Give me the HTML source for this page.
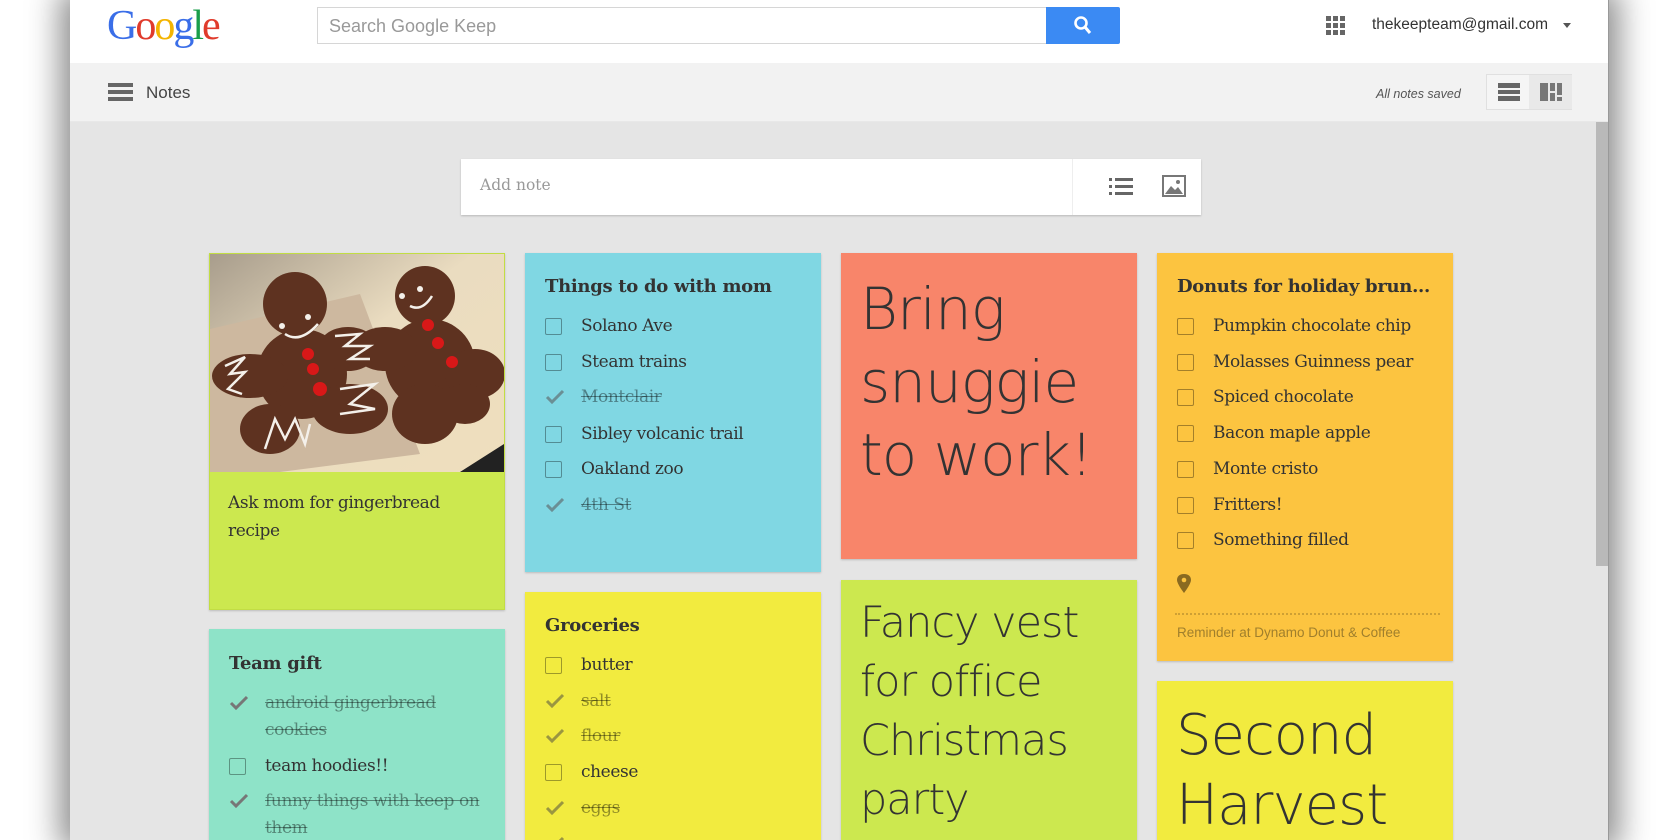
<!DOCTYPE html>
<html style="height:840px;overflow:hidden"><head><meta charset="utf-8"><style>
*{margin:0;padding:0;box-sizing:border-box}
body{width:1680px;height:840px;overflow:hidden;background:#fff;position:relative;font-family:"Liberation Sans",sans-serif}
.win{position:absolute;left:70px;top:0;width:1539px;height:840px;background:#e5e5e5;box-shadow:0 0 30px 10px rgba(0,0,0,.45);overflow:hidden}
.hdr{position:absolute;left:0;top:0;width:1539px;height:63px;background:#fff}
.tb{position:absolute;left:0;top:63px;width:1539px;height:59px;background:#f2f2f2;border-bottom:1px solid #e8e8e8}
.abs{position:absolute}
.note{position:absolute;width:296px;box-shadow:0 1px 2px rgba(0,0,0,.18)}
.slab{font-family:"DejaVu Serif","Liberation Serif",serif;color:#333}
.title{position:absolute;left:20px;font-weight:bold;font-size:18px;letter-spacing:-.3px;white-space:nowrap}
.it{position:absolute;left:20px;font-size:17px;white-space:nowrap;letter-spacing:-.4px}
.it .cb{position:absolute;left:0;top:2px;width:17px;height:17px;border:1px solid rgba(0,0,0,.35);border-radius:2px}
.it .tx{position:absolute;left:36px;top:0;line-height:20px}
.it.done .tx{text-decoration:line-through;color:rgba(0,0,0,.4)}
.big{position:absolute;left:19px;font-family:"DejaVu Sans","Liberation Sans",sans-serif;font-weight:200;color:#333;white-space:nowrap;letter-spacing:-1px}
</style></head><body>
<div class="win">
<div class="hdr">
 <div class="abs" style="left:37px;top:4px;font-family:'Liberation Serif',serif;font-size:42px;letter-spacing:-2px;line-height:44px"><span style="color:#3a6ee8">G</span><span style="color:#e03b2c">o</span><span style="color:#f4b400">o</span><span style="color:#3a6ee8">g</span><span style="color:#1a9e4a">l</span><span style="color:#e03b2c">e</span></div>
 <div class="abs" style="left:247px;top:7px;width:730px;height:37px;border:1px solid #d6d6d6;border-right:none;background:#fff;font-size:18px;color:#999;padding:8px 0 0 11px">Search Google Keep</div>
 <div class="abs" style="left:976px;top:7px;width:74px;height:37px;background:#3b8af3;border-radius:0 2px 2px 0">
  <svg width="74" height="37"><circle cx="35" cy="16" r="5.5" fill="none" stroke="#fff" stroke-width="2.6"/><line x1="39" y1="20" x2="44" y2="26" stroke="#fff" stroke-width="3"/></svg></div>
 <svg class="abs" style="left:1256px;top:16px" width="20" height="20" fill="#666"><rect x="0" y="0" width="5" height="5"/><rect x="7" y="0" width="5" height="5"/><rect x="14" y="0" width="5" height="5"/><rect x="0" y="7" width="5" height="5"/><rect x="7" y="7" width="5" height="5"/><rect x="14" y="7" width="5" height="5"/><rect x="0" y="14" width="5" height="5"/><rect x="7" y="14" width="5" height="5"/><rect x="14" y="14" width="5" height="5"/></svg>
 <div class="abs" style="left:1302px;top:16px;font-size:15.5px;color:#333">thekeepteam@gmail.com</div>
 <div class="abs" style="left:1493px;top:23px;width:0;height:0;border-left:4.5px solid transparent;border-right:4.5px solid transparent;border-top:5px solid #555"></div>
</div>
<div class="tb">
 <svg class="abs" style="left:38px;top:20px" width="25" height="18" fill="#666"><rect y="0" width="25" height="4"/><rect y="7" width="25" height="4"/><rect y="14" width="25" height="4"/></svg>
 <div class="abs" style="left:76px;top:20px;font-size:17px;color:#444">Notes</div>
 <div class="abs" style="left:1306px;top:24px;font-size:12.5px;color:#555;font-style:italic">All notes saved</div>
 <div class="abs" style="left:1416px;top:11px;width:86px;height:36px;border:1px solid #e0e0e0;background:#f5f5f5">
  <div class="abs" style="left:42px;top:0;width:43px;height:34px;background:#e9e9e9"></div>
  <svg class="abs" style="left:11px;top:8px" width="22" height="18" fill="#666"><rect y="0" width="22" height="5"/><rect y="7" width="22" height="4"/><rect y="13" width="22" height="5"/></svg>
  <svg class="abs" style="left:53px;top:8px" width="22" height="18" fill="#777"><rect x="0" y="0" width="8" height="18"/><rect x="10" y="0" width="5" height="8"/><rect x="10" y="10" width="5" height="8"/><rect x="17" y="0" width="5" height="12"/><rect x="17" y="14" width="5" height="4"/></svg>
 </div>
</div>
<div class="abs" style="left:1526px;top:122px;width:12px;height:444px;background:#b9b9b9"></div>
<div class="abs" style="left:1538px;top:0;width:1px;height:840px;background:#999"></div>
<!-- add note -->
<div class="abs" style="left:391px;top:159px;width:740px;height:56px;background:#fff;box-shadow:0 1px 2px rgba(0,0,0,.2)">
 <div class="abs slab" style="left:19px;top:17px;font-size:15.5px;color:#999">Add note</div>
 <div class="abs" style="left:611px;top:0;width:1px;height:56px;background:#eee"></div>
 <svg class="abs" style="left:648px;top:18px" width="24" height="20" fill="#666"><rect x="0" y="1" width="3" height="3"/><rect x="6" y="1" width="18" height="3"/><rect x="0" y="8" width="3" height="3"/><rect x="6" y="8" width="18" height="3"/><rect x="0" y="15" width="3" height="3"/><rect x="6" y="15" width="18" height="3"/></svg>
 <svg class="abs" style="left:701px;top:16px" width="24" height="22"><rect x="1" y="1" width="22" height="20" fill="none" stroke="#777" stroke-width="2"/><path d="M3 19 L9 11 L13 15 L16 12 L21 19Z" fill="#777"/><circle cx="16" cy="7" r="2" fill="#777"/></svg>
</div>

<div class="abs" style="left:-70px;top:0;width:1680px;height:840px">
<!-- column 1 -->
<div class="note" style="left:209px;top:253px;height:357px;background:#cce84f;border:1px solid #c2dd44">
 <svg class="abs" style="left:0;top:0" width="294" height="218" viewBox="0 0 294 218">
  <defs><linearGradient id="bg" x1="0" y1="0" x2="1" y2="1"><stop offset="0" stop-color="#a89d8c"/><stop offset=".45" stop-color="#eadcc0"/><stop offset="1" stop-color="#efdfbd"/></linearGradient></defs>
  <rect width="294" height="218" fill="url(#bg)"/>
  <path d="M0 75 L150 40 L210 200 L70 218 L0 218Z" fill="#cdb89f"/>
  <path d="M250 218 L294 190 L294 218Z" fill="#222"/>
  <g fill="#5e3220">
   <circle cx="85" cy="50" r="32"/><ellipse cx="92" cy="120" rx="45" ry="45"/><ellipse cx="40" cy="122" rx="38" ry="22"/><ellipse cx="138" cy="95" rx="30" ry="22"/><ellipse cx="60" cy="175" rx="30" ry="25"/><ellipse cx="140" cy="155" rx="38" ry="25"/>
   <circle cx="215" cy="42" r="30"/><ellipse cx="220" cy="110" rx="45" ry="45"/><ellipse cx="175" cy="95" rx="32" ry="22"/><ellipse cx="265" cy="120" rx="30" ry="25"/><ellipse cx="215" cy="160" rx="33" ry="30"/><ellipse cx="255" cy="150" rx="25" ry="20"/>
  </g>
  <g fill="none" stroke="#f4f0ea" stroke-width="2.5">
   <path d="M75 80 Q90 90 108 70"/><path d="M200 52 Q212 58 222 42"/>
   <path d="M15 112 L35 103 L20 120 L35 118 L18 135 L32 140"/><path d="M125 82 L150 80 L135 92 L160 92 L140 105 L160 105"/>
   <path d="M55 195 L65 165 L75 185 L85 165 L95 190 L100 170"/><path d="M130 135 L165 130 L140 150 L165 155 L130 160"/>
  </g>
  <g fill="#f4f0ea"><circle cx="72" cy="72" r="3"/><circle cx="98" cy="63" r="3"/><circle cx="192" cy="42" r="3"/><circle cx="210" cy="35" r="3"/></g>
  <g fill="#d81818"><circle cx="98" cy="100" r="6"/><circle cx="103" cy="115" r="6"/><circle cx="110" cy="135" r="7"/><circle cx="218" cy="71" r="6"/><circle cx="228" cy="89" r="6"/><circle cx="242" cy="108" r="6"/></g>
 </svg>
 <div class="abs slab" style="left:18px;top:235px;font-size:17px;line-height:28px;width:230px;letter-spacing:-.4px">Ask mom for gingerbread recipe</div>
</div>
<div class="note slab" style="left:209px;top:629px;height:230px;background:#8ee3c8">
 <div class="title" style="top:24px">Team gift</div>
 <div class="it done" style="top:64px"><svg class="abs" style="left:0;top:2px" width="20" height="16"><path d="M2 8 L7 13 L18 2" fill="none" stroke="#777" stroke-width="3"/></svg><span class="tx">android gingerbread</span></div>
 <div class="it done" style="top:91px"><span class="tx">cookies</span></div>
 <div class="it" style="top:127px"><span class="cb"></span><span class="tx">team hoodies!!</span></div>
 <div class="it done" style="top:162px"><svg class="abs" style="left:0;top:2px" width="20" height="16"><path d="M2 8 L7 13 L18 2" fill="none" stroke="#777" stroke-width="3"/></svg><span class="tx">funny things with keep on</span></div>
 <div class="it done" style="top:189px"><span class="tx">them</span></div>
</div>

<!-- column 2 -->
<div class="note slab" style="left:525px;top:253px;height:319px;background:#80d7e3">
 <div class="title" style="top:23px">Things to do with mom</div>
 <div class="it" style="top:63px"><span class="cb"></span><span class="tx">Solano Ave</span></div>
 <div class="it" style="top:99px"><span class="cb"></span><span class="tx">Steam trains</span></div>
 <div class="it done" style="top:134px"><svg class="abs" style="left:0;top:2px" width="20" height="16"><path d="M2 8 L7 13 L18 2" fill="none" stroke="#6a8f95" stroke-width="3"/></svg><span class="tx">Montclair</span></div>
 <div class="it" style="top:171px"><span class="cb"></span><span class="tx">Sibley volcanic trail</span></div>
 <div class="it" style="top:206px"><span class="cb"></span><span class="tx">Oakland zoo</span></div>
 <div class="it done" style="top:242px"><svg class="abs" style="left:0;top:2px" width="20" height="16"><path d="M2 8 L7 13 L18 2" fill="none" stroke="#6a8f95" stroke-width="3"/></svg><span class="tx">4th St</span></div>
</div>
<div class="note slab" style="left:525px;top:592px;height:260px;background:#f2eb3f">
 <div class="title" style="top:23px">Groceries</div>
 <div class="it" style="top:63px"><span class="cb"></span><span class="tx">butter</span></div>
 <div class="it done" style="top:99px"><svg class="abs" style="left:0;top:2px" width="20" height="16"><path d="M2 8 L7 13 L18 2" fill="none" stroke="#9a9640" stroke-width="3"/></svg><span class="tx">salt</span></div>
 <div class="it done" style="top:134px"><svg class="abs" style="left:0;top:2px" width="20" height="16"><path d="M2 8 L7 13 L18 2" fill="none" stroke="#9a9640" stroke-width="3"/></svg><span class="tx">flour</span></div>
 <div class="it" style="top:170px"><span class="cb"></span><span class="tx">cheese</span></div>
 <div class="it done" style="top:206px"><svg class="abs" style="left:0;top:2px" width="20" height="16"><path d="M2 8 L7 13 L18 2" fill="none" stroke="#9a9640" stroke-width="3"/></svg><span class="tx">eggs</span></div>
 <div class="it done" style="top:242px"><svg class="abs" style="left:0;top:2px" width="20" height="16"><path d="M2 8 L7 13 L18 2" fill="none" stroke="#9a9640" stroke-width="3"/></svg></div>
</div>

<!-- column 3 -->
<div class="note" style="left:841px;top:253px;height:306px;background:#f8856a">
 <div class="big" style="top:20px;font-size:58px;line-height:73px">Bring<br>snuggie<br>to work!</div>
</div>
<div class="note" style="left:841px;top:580px;height:280px;background:#cce84f">
 <div class="big" style="top:14px;font-size:43px;line-height:59px">Fancy vest<br>for office<br>Christmas<br>party</div>
</div>

<!-- column 4 -->
<div class="note slab" style="left:1157px;top:253px;height:408px;background:#fcc440">
 <div class="title" style="top:23px">Donuts for holiday brun...</div>
 <div class="it" style="top:63px"><span class="cb"></span><span class="tx">Pumpkin chocolate chip</span></div>
 <div class="it" style="top:99px"><span class="cb"></span><span class="tx">Molasses Guinness pear</span></div>
 <div class="it" style="top:134px"><span class="cb"></span><span class="tx">Spiced chocolate</span></div>
 <div class="it" style="top:170px"><span class="cb"></span><span class="tx">Bacon maple apple</span></div>
 <div class="it" style="top:206px"><span class="cb"></span><span class="tx">Monte cristo</span></div>
 <div class="it" style="top:242px"><span class="cb"></span><span class="tx">Fritters!</span></div>
 <div class="it" style="top:277px"><span class="cb"></span><span class="tx">Something filled</span></div>
 <svg class="abs" style="left:20px;top:321px" width="14" height="20"><path d="M7 0 C2 0 0 3 0 6 C0 10 7 19 7 19 C7 19 14 10 14 6 C14 3 12 0 7 0Z" fill="#8a6a20"/><circle cx="7" cy="6" r="2.3" fill="#fcc440"/></svg>
 <div class="abs" style="left:18px;top:360px;width:265px;border-top:2px dotted rgba(0,0,0,.18)"></div>
 <div class="abs" style="left:20px;top:372px;font-family:'Liberation Sans',sans-serif;font-size:13.5px;color:#a07f2c">Reminder at Dynamo Donut &amp; Coffee</div>
</div>
<div class="note" style="left:1157px;top:681px;height:200px;background:#f2eb3f">
 <div class="big" style="top:20px;font-size:56px;line-height:70px">Second<br>Harvest</div>
</div>
</div>
</div>
</body></html>
